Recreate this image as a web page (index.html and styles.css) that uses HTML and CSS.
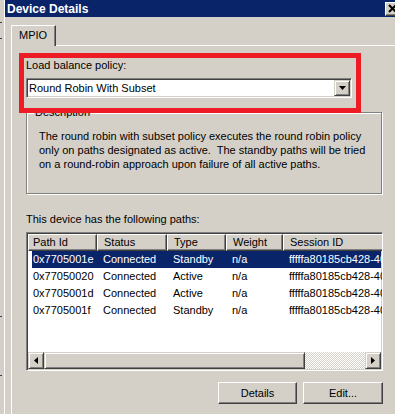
FILE: index.html
```html
<!doctype html>
<html lang="en">
  <head>
    <meta charset="UTF-8">
    <title>Device Details</title>
    <link rel="stylesheet" href="styles.css">
  </head>
  <body>
    <div class="screen">
      <!-- edge of the window behind -->
      <div class="back-window">
        <span class="tick t1"></span>
        <span class="tick t2"></span>
        <span class="tick t3"></span>
        <span class="tick t4"></span>
      </div>
      <div class="window">
        <div class="titlebar">
          <span class="title">Device Details</span>
          <span class="close-btn">
            <svg viewBox="0 0 10 9" width="10" height="9">
              <path d="M1 1l7 7M8 1l-7 7" stroke="#000" stroke-width="2" fill="none"/>
            </svg>
          </span>
        </div>
        <div class="window-body">
          <div class="tabs">
            <div class="tab active">MPIO</div>
          </div>
          <div class="tab-panel">
            <!-- highlighted policy picker -->
            <div class="policy-box">
              <div class="field-label">Load balance policy:</div>
              <div class="combo">
                <span class="combo-value">Round Robin With Subset</span>
                <span class="combo-btn">
                  <svg viewBox="0 0 7 4" width="7" height="4"><path d="M0 0h7L3.5 4z" fill="#000"/></svg>
                </span>
              </div>
            </div>
            <fieldset class="desc">
              <legend>Description</legend>
              <p>The round robin with subset policy executes the round robin policy<br>
              only on paths designated as active.&nbsp; The standby paths will be tried<br>
              on a round-robin approach upon failure of all active paths.</p>
            </fieldset>
            <div class="paths-label">This device has the following paths:</div>
            <div class="listview">
              <div class="lv-header">
                <span class="lv-col first">Path Id</span>
                <span class="lv-col">Status</span>
                <span class="lv-col">Type</span>
                <span class="lv-col">Weight</span>
                <span class="lv-col">Session ID</span>
              </div>
              <div class="lv-rows">
                <div class="lv-row selected">
                  <span>0x7705001e</span><span>Connected</span><span>Standby</span><span>n/a</span><span>fffffa80185cb428-4000</span>
                </div>
                <div class="lv-row">
                  <span>0x77050020</span><span>Connected</span><span>Active</span><span>n/a</span><span>fffffa80185cb428-4000</span>
                </div>
                <div class="lv-row">
                  <span>0x7705001d</span><span>Connected</span><span>Active</span><span>n/a</span><span>fffffa80185cb428-4000</span>
                </div>
                <div class="lv-row">
                  <span>0x7705001f</span><span>Connected</span><span>Standby</span><span>n/a</span><span>fffffa80185cb428-4000</span>
                </div>
              </div>
              <div class="hscroll">
                <span class="sb-btn">
                  <svg viewBox="0 0 4 7" width="4" height="7"><path d="M4 0v7L0 3.5z" fill="#000"/></svg>
                </span>
                <span class="sb-thumb"></span>
                <span class="sb-track"></span>
                <span class="sb-btn">
                  <svg viewBox="0 0 4 7" width="4" height="7"><path d="M0 0v7L4 3.5z" fill="#000"/></svg>
                </span>
              </div>
            </div>
            <div class="actions">
              <button class="btn details">Details</button>
              <button class="btn edit">Edit...</button>
            </div>
          </div>
        </div>
      </div>
    </div>
  </body>
</html>
```

FILE: styles.css
```css
:root {
  --face: #d4d0c8;
  --shadow: #808080;
  --dark: #404040;
  --title: #0a246a;
  --red: #ed1c24;
}
body {
  margin: 0;
  width: 395px;
  height: 414px;
  overflow: hidden;
  background: var(--face);
  font-family: "Liberation Sans", Arial, sans-serif;
  font-size: 11px;
  color: #000;
}
.screen {
  display: flex;
  height: 414px;
}
/* Window behind, only its edge shows */
.back-window {
  width: 4px;
  flex-shrink: 0;
  border-right: 1px solid #fff;
  display: flex;
  flex-direction: column;
}
.tick {
  display: block;
  width: 2px;
  height: 1px;
  background: var(--dark);
}
.t1 { margin-top: 22px; }
.t2 { margin-top: 15px; }
.t3 { margin-top: 277px; }
.t4 { margin-top: 58px; }
.window {
  width: 400px;
  flex-shrink: 0;
  display: flex;
  flex-direction: column;
}
.titlebar {
  height: 17px;
  background: var(--title);
  color: #fff;
  display: flex;
  align-items: center;
  justify-content: space-between;
  padding-left: 2px;
}
.title {
  font-weight: bold;
  font-size: 12px;
}
.close-btn {
  width: 16px;
  height: 14px;
  box-sizing: border-box;
  margin-right: 4px;
  background: var(--face);
  border: 1px solid;
  border-color: #fff var(--dark) var(--dark) #fff;
  box-shadow: inset -1px -1px 0 var(--shadow);
  display: flex;
  align-items: center;
  justify-content: center;
}
.close-btn svg { display: block; }
.window-body {
  padding: 8px 0 0 6px;
  flex: 1;
  display: flex;
  flex-direction: column;
}
.tabs {
  display: flex;
}
.tab {
  position: relative;
  z-index: 1;
  width: 45px;
  height: 21px;
  box-sizing: border-box;
  margin-bottom: -1px;
  padding-left: 7px;
  line-height: 19px;
  background: var(--face);
  border-top: 1px solid #fff;
  border-left: 1px solid #fff;
  border-right: 1px solid var(--dark);
  box-shadow: inset -1px 0 0 var(--shadow);
}
.tab-panel {
  flex: 1;
  border-top: 1px solid #fff;
  border-left: 1px solid #fff;
  padding: 7px 0 0 7px;
}
/* Red highlight around the policy picker */
.policy-box {
  position: relative;
  z-index: 1;
  width: 342px;
  height: 60px;
  box-sizing: border-box;
  border: 5px solid var(--red);
  padding: 1px 0 0 2px;
}
.field-label {
  line-height: 13px;
}
.combo {
  margin-top: 6px;
  width: 326px;
  height: 20px;
  box-sizing: border-box;
  background: #fff;
  border: 1px solid;
  border-color: var(--shadow) #fff #fff var(--shadow);
  box-shadow: inset 1px 1px 0 var(--dark), inset -1px -1px 0 var(--face);
  padding: 1px;
  display: flex;
  align-items: center;
}
.combo-value {
  padding-left: 1px;
  flex: 1;
}
.combo-btn {
  width: 16px;
  height: 16px;
  box-sizing: border-box;
  background: var(--face);
  border: 1px solid;
  border-color: var(--face) var(--dark) var(--dark) var(--face);
  box-shadow: inset 1px 1px 0 #fff, inset -1px -1px 0 var(--shadow);
  display: flex;
  align-items: center;
  justify-content: center;
}
.combo-btn svg { display: block; }
/* Description group box */
.desc {
  margin: -7px 0 0 7px;
  padding: 0 0 0 7px;
  width: 356px;
  min-width: 0;
  box-sizing: border-box;
  border: 1px solid var(--shadow);
  box-shadow: 1px 1px 0 #fff, inset 1px 1px 0 #fff;
}
.desc legend {
  padding: 0 1px;
  line-height: 13px;
  background: var(--face);
}
.desc p {
  margin: 10px 0 22px 5px;
  line-height: 14px;
  white-space: nowrap;
}
.paths-label {
  margin: 19px 0 0 7px;
  line-height: 13px;
}
/* Path list */
.listview {
  margin: 6px 0 0 7px;
  width: 357px;
  height: 139px;
  box-sizing: border-box;
  border: 1px solid;
  border-color: var(--shadow) #fff #fff var(--shadow);
  box-shadow: inset 1px 1px 0 var(--dark), inset -1px -1px 0 var(--face);
  padding: 1px;
  background: #fff;
  display: flex;
  flex-direction: column;
  overflow: hidden;
}
.lv-header {
  display: grid;
  grid-template-columns: 69px 70px 59px 57px 120px;
  height: 17px;
  flex-shrink: 0;
}
.lv-col {
  box-sizing: border-box;
  height: 17px;
  line-height: 15px;
  padding-left: 6px;
  background: var(--face);
  border: 1px solid;
  border-color: #fff var(--dark) var(--dark) #fff;
  box-shadow: inset -1px -1px 0 var(--shadow);
  white-space: nowrap;
}
.lv-col.first { padding-left: 4px; }
.lv-rows {
  flex: 1;
}
.lv-row {
  display: grid;
  grid-template-columns: 65px 70px 59px 57px 120px;
  margin-left: 4px;
  height: 17px;
  line-height: 17px;
  white-space: nowrap;
}
.lv-row span { padding-left: 6px; }
.lv-row span:first-child { padding-left: 1px; }
.lv-row.selected {
  background: var(--title);
  color: #fff;
}
.hscroll {
  display: flex;
  height: 17px;
  flex-shrink: 0;
}
.sb-btn, .sb-thumb {
  box-sizing: border-box;
  height: 17px;
  background: var(--face);
  border: 1px solid;
  border-color: var(--face) var(--dark) var(--dark) var(--face);
  box-shadow: inset 1px 1px 0 #fff, inset -1px -1px 0 var(--shadow);
}
.sb-btn {
  width: 16px;
  display: flex;
  align-items: center;
  justify-content: center;
}
.sb-btn svg { display: block; }
.sb-thumb { width: 261px; }
.sb-track {
  flex: 1;
  background: repeating-conic-gradient(#fff 0 25%, var(--face) 0 50%) 0 0 / 2px 2px;
}
.actions {
  display: flex;
  justify-content: flex-end;
  gap: 6px;
  width: 357px;
  margin: 11px 0 0 7px;
}
.btn {
  height: 22px;
  box-sizing: border-box;
  padding: 0;
  font: inherit;
  color: #000;
  background: var(--face);
  border: 1px solid;
  border-color: #fff var(--dark) var(--dark) #fff;
  box-shadow: inset -1px -1px 0 var(--shadow);
}
.btn.details { width: 79px; }
.btn.edit { width: 80px; }
```
